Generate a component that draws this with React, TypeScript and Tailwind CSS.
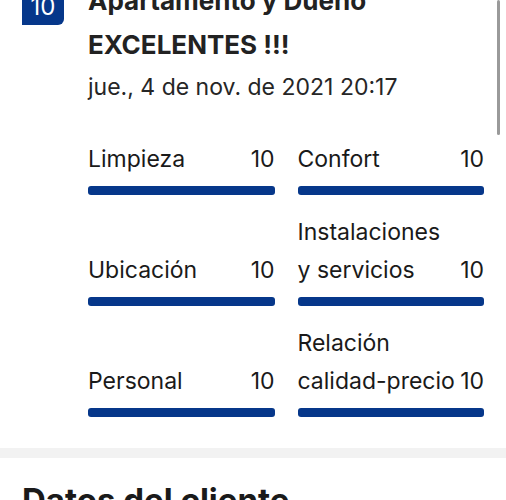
import React from "react";

type Score = { label: React.ReactNode; value: number };

const scores: Score[] = [
  { label: "Limpieza", value: 10 },
  { label: "Confort", value: 10 },
  { label: "Ubicación", value: 10 },
  {
    label: (
      <>
        Instalaciones
        <br />y servicios
      </>
    ),
    value: 10,
  },
  { label: "Personal", value: 10 },
  {
    label: (
      <>
        Relación
        <br />
        calidad-precio
      </>
    ),
    value: 10,
  },
];

const ScoreBar = ({ label, value }: Score) => {
  return (
    <div className="flex flex-col justify-end">
      <div className="flex items-end justify-between text-[23px] leading-[38px] text-[#1a1a1a]">
        <span>{label}</span>
        <span className="shrink-0">{value}</span>
      </div>
      <div className="mt-[8px] h-[9px] rounded-[3px] bg-[#06378a]" style={{ width: `${value * 10}%` }} />
    </div>
  );
};

const App = () => {
  return (
    <div className="relative h-[500px] w-[506px] overflow-hidden bg-white font-['Inter','Liberation_Sans',sans-serif]">
      <div className="absolute right-[6px] top-0 h-[135px] w-[3px] rounded-full bg-[#9a9a9a]" />

      <div className="-mt-[21px] flex gap-[24px] pl-[22px] pr-[22px] pb-[31px]">
        <div className="mt-[4px] flex h-[42px] w-[42px] shrink-0 items-center justify-center rounded-[6px] rounded-bl-none bg-[#06378a] pt-[6px] text-[24px] text-white">
          10
        </div>
        <div className="flex-1">
          <h2 className="text-[26px] font-bold leading-[44px] text-[#222]">
            Apartamento y Dueño
            <br />
            EXCELENTES !!!
          </h2>
          <p className="mt-[1px] text-[23px] leading-[38px] text-[#262626]">jue., 4 de nov. de 2021 20:17</p>

          <div className="mt-[34px] grid grid-cols-2 gap-x-[23px] gap-y-[18px]">
            {scores.map((s, i) => (
              <ScoreBar key={i} label={s.label} value={s.value} />
            ))}
          </div>
        </div>
      </div>

      <div className="h-[10px] bg-[#f2f2f2]" />

      <div className="px-[22px] pt-[22px]">
        <h2 className="text-[33px] font-bold leading-[40px] text-[#1a1a1a]">Datos del cliente</h2>
      </div>
    </div>
  );
};

export default App;
